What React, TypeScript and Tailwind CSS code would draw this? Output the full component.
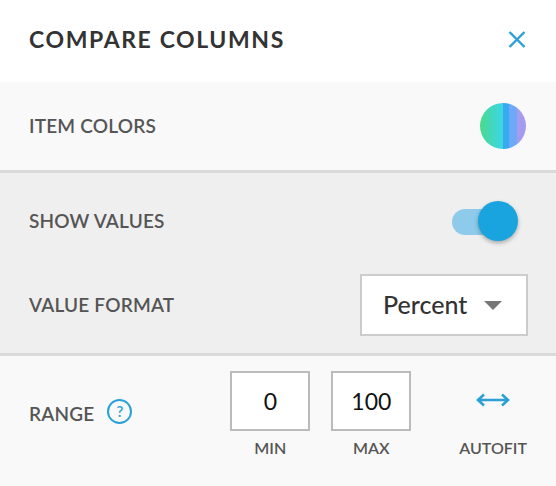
import React, { useState } from "react";

const labelCls =
  "text-[19px] font-semibold uppercase tracking-[0.2px] text-[#555555]";

const App: React.FC = () => {
  const [showValues, setShowValues] = useState(true);
  const [min, setMin] = useState("0");
  const [max, setMax] = useState("100");

  return (
    <div
      className="w-[556px] h-[486px] flex flex-col bg-[#f9f9f9] overflow-hidden"
      style={{ fontFamily: "Lato, 'Open Sans', sans-serif" }}
    >
      {/* header */}
      <div className="h-[82px] shrink-0 bg-white flex items-center justify-between pl-[29px] pr-[28px]">
        <h1 className="text-[23px] font-bold tracking-[1.6px] text-[#333333] pb-[4px]">
          COMPARE COLUMNS
        </h1>
        <button className="w-[22px] h-[22px] flex items-center justify-center mb-[4px]">
          <svg width="18" height="17" viewBox="0 0 18 17">
            <path
              d="M1.5 1 L16.5 16 M16.5 1 L1.5 16"
              stroke="#2a9fd8"
              strokeWidth="2.4"
              fill="none"
            />
          </svg>
        </button>
      </div>

      {/* item colors */}
      <div className="h-[91px] shrink-0 flex items-center justify-between pl-[29px] pr-[30px] border-b-[3px] border-[#dadada]">
        <span className={labelCls}>Item Colors</span>
        <div className="w-[46px] h-[46px] rounded-full bg-[linear-gradient(90deg,#4cd98b_0%,#40d8c2_28%,#3dd6e5_50%,#36abf0_50%,#36abf0_64%,#6ea8f8_64%,#6ea8f8_80%,#a59cf0_80%)]" />
      </div>

      {/* show values / value format */}
      <div className="h-[183px] shrink-0 bg-[#efefef] border-b-[3px] border-[#dadada] flex flex-col pl-[29px] pr-[28px]">
        <div className="h-[92px] flex items-center justify-between pt-[4px]">
          <span className={labelCls}>Show Values</span>
          <button
            onClick={() => setShowValues(!showValues)}
            className="relative w-[70px] h-[40px] mr-[6px]"
          >
            <span
              className={`absolute left-0 top-[8px] w-[58px] h-[26px] rounded-full ${
                showValues ? "bg-[#8ecbea]" : "bg-[#cccccc]"
              }`}
            />
            <span
              className={`absolute top-0 w-[40px] h-[40px] rounded-full shadow-[0_2px_4px_rgba(0,0,0,0.3)] ${
                showValues ? "left-[26px] bg-[#19a4e0]" : "left-0 bg-white"
              }`}
            />
          </button>
        </div>
        <div className="flex-1 flex items-center justify-between pb-[8px]">
          <span className={labelCls}>Value Format</span>
          <div className="w-[168px] h-[62px] bg-white border-2 border-[#cccccc] flex items-center justify-between pl-[21px] pr-[24px]">
            <span className="text-[25px] text-[#333333] font-medium">Percent</span>
            <span className="w-0 h-0 border-l-[9px] border-r-[9px] border-t-[9px] border-l-transparent border-r-transparent border-t-[#777777]" />
          </div>
        </div>
      </div>

      {/* range */}
      <div className="flex-1 flex items-start pl-[29px] pr-[29px] pt-[15px]">
        <div className="flex items-center gap-[13px] pt-[28px]">
          <span className={labelCls}>Range</span>
          <span className="w-[25px] h-[25px] mb-[6px] rounded-full border-2 border-[#2aa1d6] text-[#2aa1d6] text-[15px] font-semibold flex items-center justify-center">
            ?
          </span>
        </div>
        <div className="ml-auto flex gap-[21px]">
          <div className="flex flex-col items-center">
            <input
              value={min}
              onChange={(e) => setMin(e.target.value)}
              className="w-[80px] h-[60px] bg-white border-2 border-[#bbbbbb] text-center text-[23px] text-[#111111] outline-none"
            />
            <span className="mt-[5px] text-[16px] font-semibold text-[#555555]">MIN</span>
          </div>
          <div className="flex flex-col items-center">
            <input
              value={max}
              onChange={(e) => setMax(e.target.value)}
              className="w-[80px] h-[60px] bg-white border-2 border-[#bbbbbb] text-center text-[23px] text-[#111111] outline-none"
            />
            <span className="mt-[5px] text-[16px] font-semibold text-[#555555]">MAX</span>
          </div>
          <div className="flex flex-col items-center ml-[27px]">
            <div className="h-[60px] flex items-start justify-center pt-[22px]">
              <svg width="34" height="14" viewBox="0 0 34 14">
                <path
                  d="M2 7 H32 M8 1.5 L2 7 L8 12.5 M26 1.5 L32 7 L26 12.5"
                  stroke="#2aa1d6"
                  strokeWidth="2.6"
                  fill="none"
                  strokeLinejoin="miter"
                />
              </svg>
            </div>
            <span className="mt-[5px] text-[16px] font-semibold text-[#555555]">
              AUTOFIT
            </span>
          </div>
        </div>
      </div>
    </div>
  );
};

export default App;
